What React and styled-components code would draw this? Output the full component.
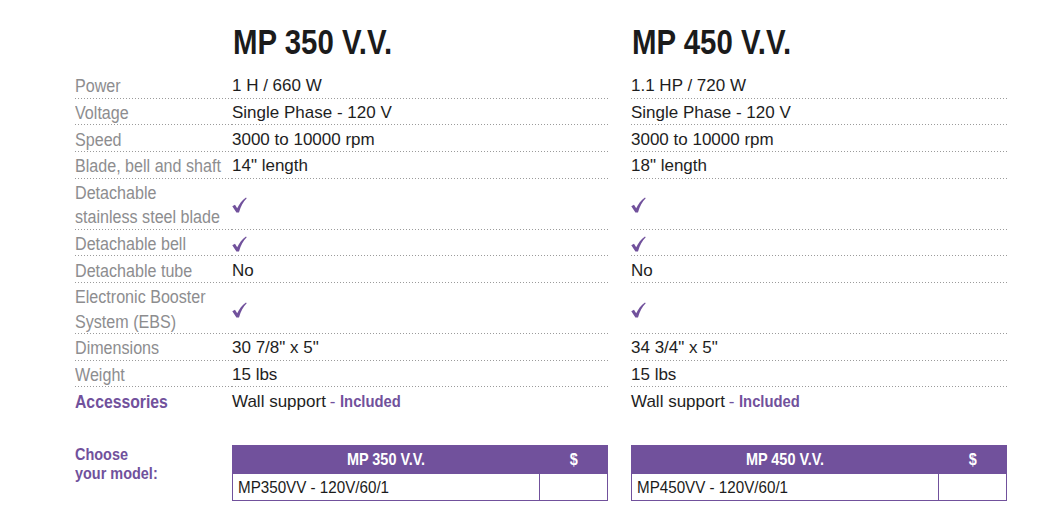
import React from 'react'
import styled, { createGlobalStyle } from 'styled-components'

const purple = '#71519c'

const GlobalStyle = createGlobalStyle`
  body {
    margin: 0;
    background: #fff;
    font-family: 'Liberation Sans', Arial, sans-serif;
  }
`

// no condensed family is installed, so narrow the glyphs by hand
const Squeeze = styled.span`
  display: inline-block;
  white-space: nowrap;
  transform: scaleX(${props => props.$x || 0.92});
  transform-origin: ${props => props.$center ? 'center' : 'left'} center;
`

const Sheet = styled.div`
  width: 1056px;
  height: 528px;
  box-sizing: border-box;
  padding: 22px 0 0 75px;
`

const Grid = styled.div`
  display: grid;
  grid-template-columns: 157px 376px 23px 376px;
`

const Title = styled.h1`
  grid-column: ${props => props.$col};
  margin: 0 0 10px;
  padding-left: 1px;
  font-weight: 700;
  font-size: 35px;
  line-height: 40px;
  color: #1b1b1b;
`

const Cell = styled.div`
  grid-column: ${props => props.$col || 'auto'};
  display: flex;
  align-items: center;
  padding: 2.3px 0 0.1px;
  line-height: 24.3px;
  background: ${props => props.$plain
    ? 'none'
    : 'linear-gradient(to right, #9b9b9b 0 1px, transparent 1px) left bottom / 3px 1px repeat-x'};
`

const Label = styled(Cell)`
  font-size: 17.5px;
  color: ${props => props.$accent ? purple : '#8d8d8f'};
  font-weight: ${props => props.$accent ? 700 : 400};
`

const Value = styled(Cell)`
  font-size: 17px;
  color: #1e1e1e;
`

const Dash = styled.span`
  color: ${purple};
  margin: 0 4px;
`

const Included = styled(Squeeze)`
  color: ${purple};
  font-weight: 700;
`

const OrderRow = styled(Grid)`
  margin-top: 31px;
  align-items: start;
`

const ChooseLabel = styled.div`
  font-weight: 700;
  font-size: 17px;
  line-height: 19px;
  color: ${purple};
`

const OrderTable = styled.table`
  grid-column: ${props => props.$col};
  width: 376px;
  border-collapse: collapse;

  th {
    background: ${purple};
    color: #fff;
    font-weight: 700;
    font-size: 17px;
    height: 27px;
    padding: 0;
    text-align: center;
    border: 1.5px solid ${purple};
  }

  td {
    height: 26px;
    padding: 0 0 0 5px;
    font-size: 16.5px;
    color: #1b1b1b;
    border: 1.5px solid ${purple};
  }

  th:last-child, td:last-child {
    width: 62px;
  }
`

const CheckMark = () => (
  <svg width="15" height="16" viewBox="0 0 15 16">
    <path
      d="M0.3 9.2 L3 7.8 L5.2 11.3 C7.3 6.9 9.9 3.2 14 0.4 L14.7 1.3 C11.3 4.8 8.8 9.3 7 15.5 L4.4 15.5 Z"
      fill={purple}
    />
  </svg>
)

const specs = [
  { label: 'Power', a: '1 H / 660 W', b: '1.1 HP / 720 W' },
  { label: 'Voltage', a: 'Single Phase - 120 V', b: 'Single Phase - 120 V' },
  { label: 'Speed', a: '3000 to 10000 rpm', b: '3000 to 10000 rpm' },
  { label: 'Blade, bell and shaft', a: '14" length', b: '18" length' },
  { label: ['Detachable', 'stainless steel blade'], a: true, b: true },
  { label: 'Detachable bell', a: true, b: true },
  { label: 'Detachable tube', a: 'No', b: 'No' },
  { label: ['Electronic Booster', 'System (EBS)'], a: true, b: true },
  { label: 'Dimensions', a: '30 7/8" x 5"', b: '34 3/4" x 5"' },
  { label: 'Weight', a: '15 lbs', b: '15 lbs' },
]

const renderValue = v => (v === true ? <CheckMark /> : v)

const models = [
  { col: 2, name: 'MP 350 V.V.', code: 'MP350VV - 120V/60/1' },
  { col: 4, name: 'MP 450 V.V.', code: 'MP450VV - 120V/60/1' },
]

export default function App() {
  return (
    <Sheet>
      <GlobalStyle />
      <Grid>
        <Title $col={2}><Squeeze $x={0.84}>MP 350 V.V.</Squeeze></Title>
        <Title $col={4}><Squeeze $x={0.84}>MP 450 V.V.</Squeeze></Title>

        {specs.map((row, i) => {
          const double = Array.isArray(row.label)
          return (
            <React.Fragment key={i}>
              <Label $col={1}>
                <Squeeze>
                  {double ? <>{row.label[0]}<br />{row.label[1]}</> : row.label}
                </Squeeze>
              </Label>
              <Value $col={2}>{renderValue(row.a)}</Value>
              <Value $col={4}>{renderValue(row.b)}</Value>
            </React.Fragment>
          )
        })}

        <Label $col={1} $plain $accent><Squeeze $x={0.9}>Accessories</Squeeze></Label>
        {[2, 4].map(col => (
          <Value key={col} $col={col} $plain>
            Wall support<Dash>-</Dash><Included $x={0.87}>Included</Included>
          </Value>
        ))}
      </Grid>

      <OrderRow>
        <ChooseLabel><Squeeze $x={0.85}>Choose<br />your model:</Squeeze></ChooseLabel>
        {models.map(m => (
          <OrderTable key={m.name} $col={m.col}>
            <thead>
              <tr>
                <th><Squeeze $x={0.85} $center>{m.name}</Squeeze></th>
                <th><Squeeze $x={0.85} $center>$</Squeeze></th>
              </tr>
            </thead>
            <tbody>
              <tr>
                <td><Squeeze $x={0.92}>{m.code}</Squeeze></td>
                <td></td>
              </tr>
            </tbody>
          </OrderTable>
        ))}
      </OrderRow>
    </Sheet>
  )
}
